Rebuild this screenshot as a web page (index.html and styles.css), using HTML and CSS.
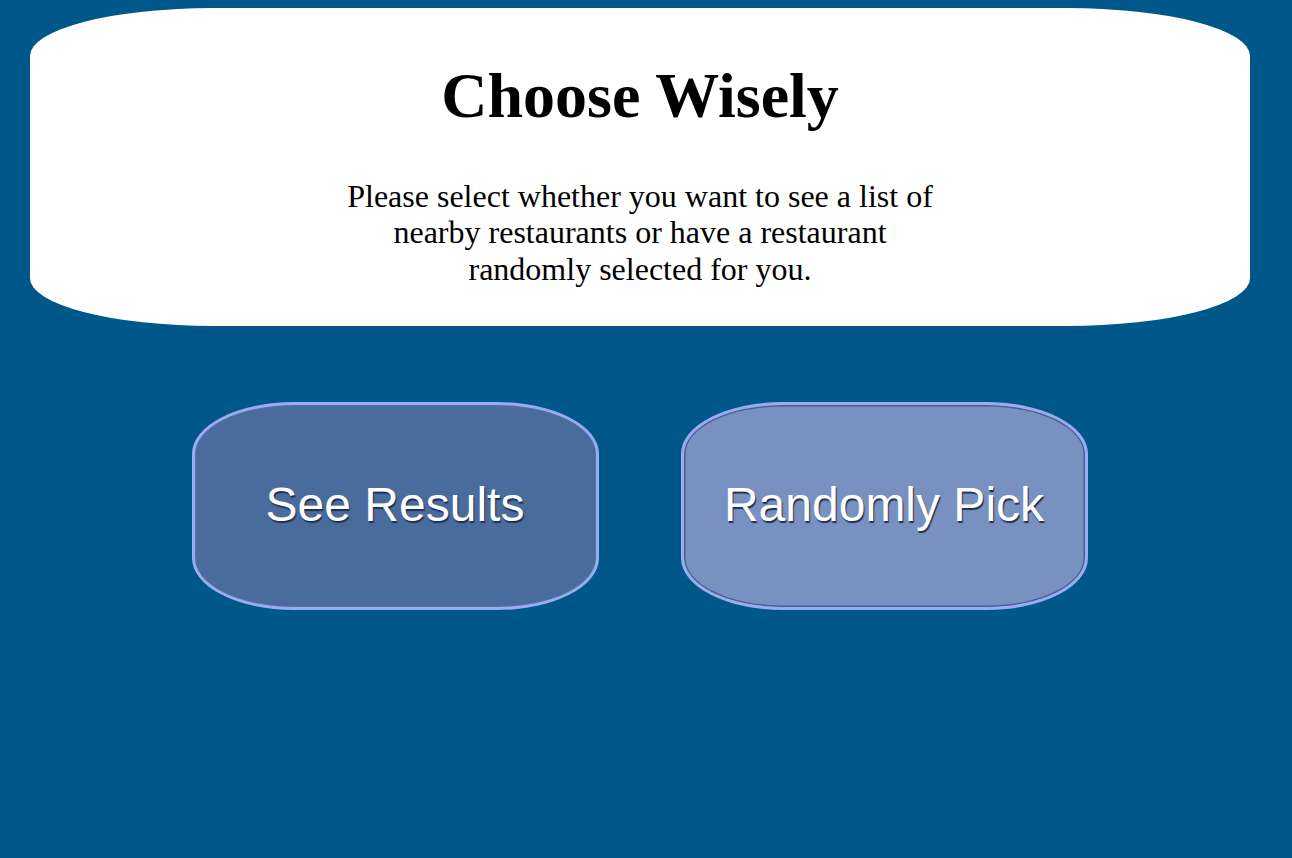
FILE: index.html
```html
<!DOCTYPE html>
<html lang="en">
<head>
<meta charset="utf-8">
<title>Choose Wisely</title>
<link rel="stylesheet" href="styles.css">
</head>
<body>
<header class="panel">
  <h1 class="title">Choose Wisely</h1>
  <p class="intro">Please select whether you want to see a list of nearby restaurants or have a restaurant randomly selected for you.</p>
</header>
<main class="choices">
  <a class="choice choice-results" href="#">See Results</a>
  <a class="choice choice-random" href="#">Randomly Pick</a>
</main>
</body>
</html>
```

FILE: styles.css
```css
html, body {
  height: 100%;
}
body {
  margin: 8px;
  background: #00578a;
  font-family: "Liberation Serif", "Times New Roman", serif;
}
.panel {
  width: 1220px;
  margin: 0 0 0 22px;
  background: #ffffff;
  border-radius: 15%;
  padding: 1px 0 39px;
  text-align: center;
  color: #000;
}
.title {
  margin: 50px 0 0;
  font-size: 64px;
  font-weight: bold;
  line-height: 73.6px;
}
.intro {
  margin: 45px auto 0;
  max-width: 600px;
  font-size: 32px;
  line-height: 36.6px;
}
.choices {
  display: flex;
  justify-content: center;
  gap: 82px;
  margin-top: 76px;
  padding-right: 13px;
}
.choice {
  box-sizing: border-box;
  width: 407px;
  height: 208px;
  display: flex;
  align-items: center;
  justify-content: center;
  border: 3.5px solid #9babef;
  border-radius: 25%;
  font-family: "Liberation Sans", Arial, sans-serif;
  font-size: 48px;
  color: #ffffff;
  text-decoration: none;
  text-shadow: 1px 1.5px 1px #1f2f55;
  padding-bottom: 4px;
}
.choice-results {
  background: #496c9c;
  box-shadow: inset 0 0 0 1px #5a6fa6;
}
.choice-random {
  background: #7891c1;
  box-shadow: inset 0 0 0 1.5px #4c5d96;
}
```
